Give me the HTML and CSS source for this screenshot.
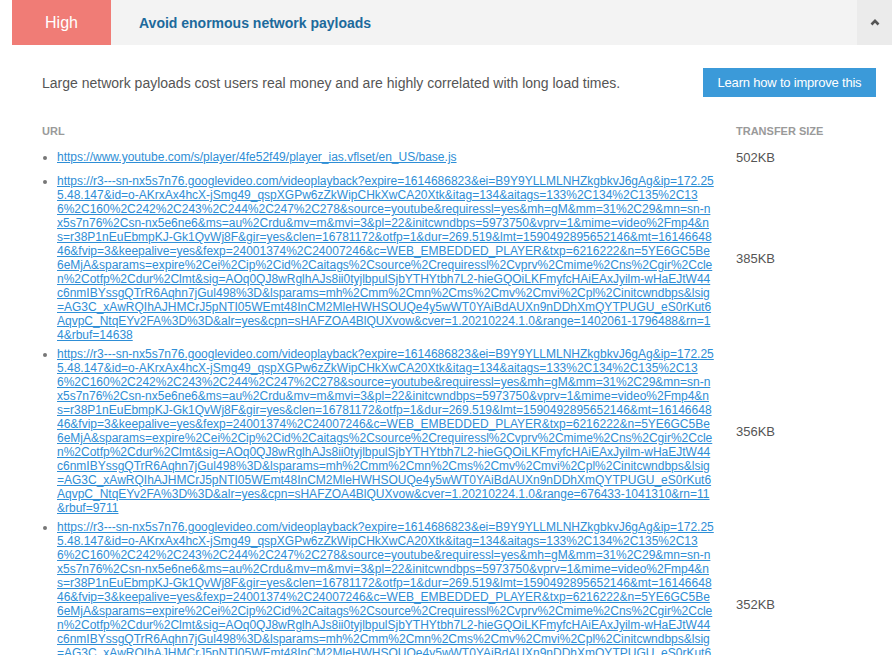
FILE: index.html
```html
<!DOCTYPE html>
<html lang="en">
<head>
<meta charset="utf-8">
<title>Avoid enormous network payloads</title>
<link rel="stylesheet" href="styles.css">
</head>
<body>
<div class="audit">
  <div class="audit-header">
    <span class="badge">High</span>
    <span class="title">Avoid enormous network payloads</span>
    <span class="toggle">
      <svg width="10" height="8" viewBox="0 0 10 8"><polyline points="1.5,6.5 5,2.8 8.5,6.5" fill="none" stroke="#555" stroke-width="2.6"/></svg>
    </span>
  </div>
  <div class="audit-body">
    <div class="intro">
      <p class="desc">Large network payloads cost users real money and are highly correlated with long load times.</p>
      <a class="btn" href="#">Learn how to improve this</a>
    </div>
    <table class="details">
      <thead>
        <tr><th class="col-url">URL</th><th class="col-size">Transfer Size</th></tr>
      </thead>
      <tbody>
        <tr>
          <td class="cell-url"><ul class="url-list"><li><a href="#">https://www.youtube.com/s/player/4fe52f49/player_ias.vflset/en_US/base.js</a></li></ul></td>
          <td class="cell-size">502KB</td>
        </tr>
        <tr>
          <td class="cell-url"><ul class="url-list"><li><a href="#">https://r3---sn-nx5s7n76.googlevideo.com/videoplayback?expire=1614686823&amp;ei=B9Y9YLLMLNHZkgbkvJ6gAg&amp;ip=172.25<br>5.48.147&amp;id=o-AKrxAx4hcX-jSmg49_qspXGPw6zZkWipCHkXwCA20Xtk&amp;itag=134&amp;aitags=133%2C134%2C135%2C13<br>6%2C160%2C242%2C243%2C244%2C247%2C278&amp;source=youtube&amp;requiressl=yes&amp;mh=gM&amp;mm=31%2C29&amp;mn=sn-n<br>x5s7n76%2Csn-nx5e6ne6&amp;ms=au%2Crdu&amp;mv=m&amp;mvi=3&amp;pl=22&amp;initcwndbps=5973750&amp;vprv=1&amp;mime=video%2Fmp4&amp;n<br>s=r38P1nEuEbmpKJ-Gk1QvWj8F&amp;gir=yes&amp;clen=16781172&amp;otfp=1&amp;dur=269.519&amp;lmt=1590492895652146&amp;mt=16146648<br>46&amp;fvip=3&amp;keepalive=yes&amp;fexp=24001374%2C24007246&amp;c=WEB_EMBEDDED_PLAYER&amp;txp=6216222&amp;n=5YE6GC5Be<br>6eMjA&amp;sparams=expire%2Cei%2Cip%2Cid%2Caitags%2Csource%2Crequiressl%2Cvprv%2Cmime%2Cns%2Cgir%2Ccle<br>n%2Cotfp%2Cdur%2Clmt&amp;sig=AOq0QJ8wRglhAJs8ii0tyjlbpulSjbYTHYtbh7L2-hieGQOiLKFmyfcHAiEAxJyilm-wHaEJtW44<br>c6nmIBYssgQTrR6Aqhn7jGul498%3D&amp;lsparams=mh%2Cmm%2Cmn%2Cms%2Cmv%2Cmvi%2Cpl%2Cinitcwndbps&amp;lsig<br>=AG3C_xAwRQIhAJHMCrJ5pNTI05WEmt48InCM2MleHWHSOUQe4y5wWT0YAiBdAUXn9nDDhXmQYTPUGU_eS0rKut6<br>AqvpC_NtqEYv2FA%3D%3D&amp;alr=yes&amp;cpn=sHAFZOA4BlQUXvow&amp;cver=1.20210224.1.0&amp;range=1402061-1796488&amp;rn=1<br>4&amp;rbuf=14638</a></li></ul></td>
          <td class="cell-size">385KB</td>
        </tr>
        <tr>
          <td class="cell-url"><ul class="url-list"><li><a href="#">https://r3---sn-nx5s7n76.googlevideo.com/videoplayback?expire=1614686823&amp;ei=B9Y9YLLMLNHZkgbkvJ6gAg&amp;ip=172.25<br>5.48.147&amp;id=o-AKrxAx4hcX-jSmg49_qspXGPw6zZkWipCHkXwCA20Xtk&amp;itag=134&amp;aitags=133%2C134%2C135%2C13<br>6%2C160%2C242%2C243%2C244%2C247%2C278&amp;source=youtube&amp;requiressl=yes&amp;mh=gM&amp;mm=31%2C29&amp;mn=sn-n<br>x5s7n76%2Csn-nx5e6ne6&amp;ms=au%2Crdu&amp;mv=m&amp;mvi=3&amp;pl=22&amp;initcwndbps=5973750&amp;vprv=1&amp;mime=video%2Fmp4&amp;n<br>s=r38P1nEuEbmpKJ-Gk1QvWj8F&amp;gir=yes&amp;clen=16781172&amp;otfp=1&amp;dur=269.519&amp;lmt=1590492895652146&amp;mt=16146648<br>46&amp;fvip=3&amp;keepalive=yes&amp;fexp=24001374%2C24007246&amp;c=WEB_EMBEDDED_PLAYER&amp;txp=6216222&amp;n=5YE6GC5Be<br>6eMjA&amp;sparams=expire%2Cei%2Cip%2Cid%2Caitags%2Csource%2Crequiressl%2Cvprv%2Cmime%2Cns%2Cgir%2Ccle<br>n%2Cotfp%2Cdur%2Clmt&amp;sig=AOq0QJ8wRglhAJs8ii0tyjlbpulSjbYTHYtbh7L2-hieGQOiLKFmyfcHAiEAxJyilm-wHaEJtW44<br>c6nmIBYssgQTrR6Aqhn7jGul498%3D&amp;lsparams=mh%2Cmm%2Cmn%2Cms%2Cmv%2Cmvi%2Cpl%2Cinitcwndbps&amp;lsig<br>=AG3C_xAwRQIhAJHMCrJ5pNTI05WEmt48InCM2MleHWHSOUQe4y5wWT0YAiBdAUXn9nDDhXmQYTPUGU_eS0rKut6<br>AqvpC_NtqEYv2FA%3D%3D&amp;alr=yes&amp;cpn=sHAFZOA4BlQUXvow&amp;cver=1.20210224.1.0&amp;range=676433-1041310&amp;rn=11<br>&amp;rbuf=9711</a></li></ul></td>
          <td class="cell-size">356KB</td>
        </tr>
        <tr>
          <td class="cell-url"><ul class="url-list"><li><a href="#">https://r3---sn-nx5s7n76.googlevideo.com/videoplayback?expire=1614686823&amp;ei=B9Y9YLLMLNHZkgbkvJ6gAg&amp;ip=172.25<br>5.48.147&amp;id=o-AKrxAx4hcX-jSmg49_qspXGPw6zZkWipCHkXwCA20Xtk&amp;itag=134&amp;aitags=133%2C134%2C135%2C13<br>6%2C160%2C242%2C243%2C244%2C247%2C278&amp;source=youtube&amp;requiressl=yes&amp;mh=gM&amp;mm=31%2C29&amp;mn=sn-n<br>x5s7n76%2Csn-nx5e6ne6&amp;ms=au%2Crdu&amp;mv=m&amp;mvi=3&amp;pl=22&amp;initcwndbps=5973750&amp;vprv=1&amp;mime=video%2Fmp4&amp;n<br>s=r38P1nEuEbmpKJ-Gk1QvWj8F&amp;gir=yes&amp;clen=16781172&amp;otfp=1&amp;dur=269.519&amp;lmt=1590492895652146&amp;mt=16146648<br>46&amp;fvip=3&amp;keepalive=yes&amp;fexp=24001374%2C24007246&amp;c=WEB_EMBEDDED_PLAYER&amp;txp=6216222&amp;n=5YE6GC5Be<br>6eMjA&amp;sparams=expire%2Cei%2Cip%2Cid%2Caitags%2Csource%2Crequiressl%2Cvprv%2Cmime%2Cns%2Cgir%2Ccle<br>n%2Cotfp%2Cdur%2Clmt&amp;sig=AOq0QJ8wRglhAJs8ii0tyjlbpulSjbYTHYtbh7L2-hieGQOiLKFmyfcHAiEAxJyilm-wHaEJtW44<br>c6nmIBYssgQTrR6Aqhn7jGul498%3D&amp;lsparams=mh%2Cmm%2Cmn%2Cms%2Cmv%2Cmvi%2Cpl%2Cinitcwndbps&amp;lsig<br>=AG3C_xAwRQIhAJHMCrJ5pNTI05WEmt48InCM2MleHWHSOUQe4y5wWT0YAiBdAUXn9nDDhXmQYTPUGU_eS0rKut6<br>AqvpC_NtqEYv2FA%3D%3D&amp;alr=yes&amp;cpn=sHAFZOA4BlQUXvow&amp;cver=1.20210224.1.0&amp;range=1041310-1393784&amp;rn=1<br>2&amp;rbuf=12920</a></li></ul></td>
          <td class="cell-size">352KB</td>
        </tr>
      </tbody>
    </table>
  </div>
</div>
</body>
</html>
```
FILE: styles.css
```css
html, body {
  margin: 0;
  padding: 0;
  background: #ffffff;
}

body {
  font-family: "Liberation Sans", Arial, Helvetica, sans-serif;
  color: #555555;
  overflow: hidden;
}

.audit {
  margin-left: 12px;
}

.audit-header {
  display: flex;
  align-items: stretch;
  height: 45px;
  background: #f3f3f3;
}

.badge {
  width: 99px;
  display: flex;
  align-items: center;
  justify-content: center;
  background: #f07c76;
  color: #ffffff;
  font-size: 16px;
}

.title {
  flex: 1;
  display: flex;
  align-items: center;
  padding-left: 28px;
  font-size: 14px;
  font-weight: bold;
  color: #1d6a9c;
}

.toggle {
  width: 35px;
  display: flex;
  align-items: center;
  justify-content: center;
  background: #ebebeb;
}

.toggle svg {
  display: block;
  margin-top: -2px;
}

.audit-body {
  padding: 0 16px 0 30px;
}

.intro {
  display: flex;
  align-items: center;
  justify-content: space-between;
  margin-top: 23px;
  height: 29px;
}

.desc {
  margin: 0;
  font-size: 14px;
  color: #555555;
}

.btn {
  display: flex;
  align-items: center;
  justify-content: center;
  width: 173px;
  height: 29px;
  background: #3b9ad9;
  color: #ffffff;
  font-size: 13px;
  letter-spacing: -0.2px;
  text-decoration: none;
}

.details {
  width: 100%;
  margin-top: 26px;
  border-collapse: collapse;
  border-spacing: 0;
}

.details th {
  text-align: left;
  font-size: 11px;
  font-weight: bold;
  text-transform: uppercase;
  color: #9a9a9a;
  line-height: 16px;
  padding: 0 0 4px 0;
}

.col-size {
  width: 140px;
}

.cell-url {
  padding: 2px 0 3px;
  vertical-align: middle;
}

.cell-size {
  padding: 7px 0 6px;
  font-size: 13px;
  line-height: 16px;
  color: #555555;
  vertical-align: middle;
}

.url-list {
  margin: 0;
  padding-left: 15px;
  font-size: 12px;
  line-height: 14px;
}

.url-list li {
  color: #777777;
  white-space: nowrap;
}

.url-list a {
  color: #2e8ed6;
  text-decoration: underline;
}
```
